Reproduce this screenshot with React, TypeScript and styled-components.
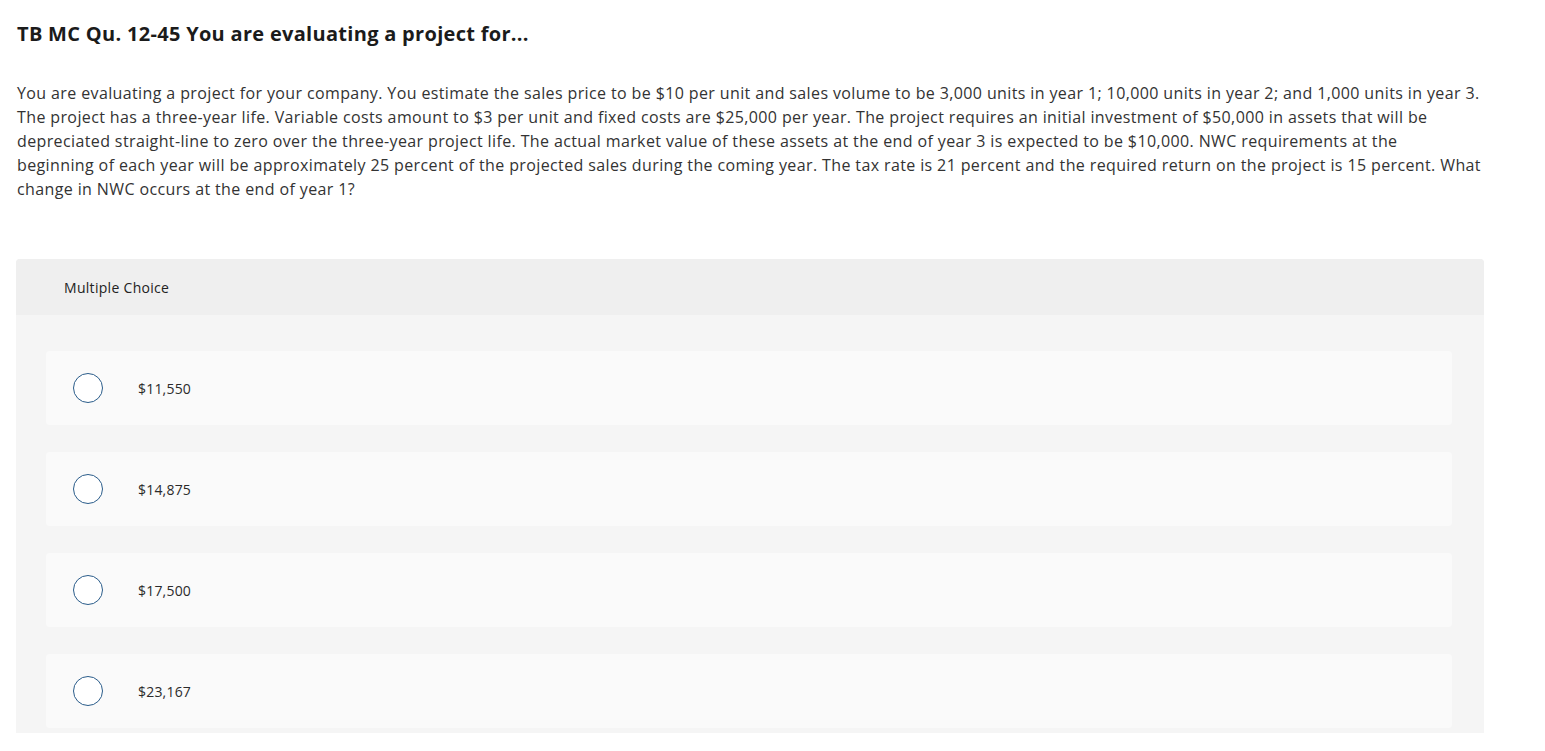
import React from "react";
import styled, { createGlobalStyle } from "styled-components";

const GlobalStyle = createGlobalStyle`
  body {
    margin: 0;
    background: #ffffff;
    font-family: "Open Sans", "Liberation Sans", sans-serif;
    color: #333333;
  }
`;

const Page = styled.div`
  padding: 19px 61px 0 16px;
`;

const Title = styled.h1`
  margin: 0 0 0 1px;
  font-size: 20px;
  line-height: 30px;
  font-weight: 700;
  letter-spacing: 0.3px;
  color: #1b1b1b;
`;

const Question = styled.p`
  margin: 32px 0 0 1px;
  font-size: 16px;
  line-height: 24px;
  letter-spacing: 0.38px;
  color: #333333;
`;

const Panel = styled.section`
  margin-top: 58px;
  background: #f5f5f5;
  border-radius: 4px 4px 0 0;
  overflow: hidden;
`;

const PanelHeader = styled.div`
  height: 56px;
  display: flex;
  align-items: center;
  padding-left: 48px;
  background: #efefef;
  font-size: 14px;
  letter-spacing: 0.3px;
  color: #222222;
`;

const Choices = styled.div`
  display: flex;
  flex-direction: column;
  gap: 27px;
  padding: 36px 32px 5px 30px;
`;

const Choice = styled.label`
  height: 74px;
  display: flex;
  align-items: center;
  background: #fafafa;
  border-radius: 4px;
  padding-left: 27px;
  cursor: pointer;
`;

const Radio = styled.span`
  width: 28px;
  height: 28px;
  border-radius: 50%;
  border: 1.5px solid #2a5c8a;
  background: #ffffff;
  flex-shrink: 0;
`;

const ChoiceText = styled.span`
  margin-left: 35px;
  font-size: 14px;
  letter-spacing: 0.2px;
  color: #2b2b2b;
`;

const choices = ["$11,550", "$14,875", "$17,500", "$23,167"];

export default function App() {
  return (
    <>
      <GlobalStyle />
      <Page>
        <Title>TB MC Qu. 12-45 You are evaluating a project for...</Title>
        <Question>
          You are evaluating a project for your company. You estimate the
          sales price to be $10 per unit and sales volume to be 3,000 units in
          year 1; 10,000 units in year 2; and 1,000 units in year 3.
          <br />
          The project has a three-year life. Variable costs amount to $3 per
          unit and fixed costs are $25,000 per year. The project requires an
          initial investment of $50,000 in assets that will be
          <br />
          depreciated straight-line to zero over the three-year project life.
          The actual market value of these assets at the end of year 3 is
          expected to be $10,000. NWC requirements at the
          <br />
          beginning of each year will be approximately 25 percent of the
          projected sales during the coming year. The tax rate is 21 percent
          and the required return on the project is 15 percent. What
          <br />
          change in NWC occurs at the end of year 1?
        </Question>
        <Panel>
          <PanelHeader>Multiple Choice</PanelHeader>
          <Choices>
            {choices.map(c => (
              <Choice key={c}>
                <Radio />
                <ChoiceText>{c}</ChoiceText>
              </Choice>
            ))}
          </Choices>
        </Panel>
      </Page>
    </>
  );
}
